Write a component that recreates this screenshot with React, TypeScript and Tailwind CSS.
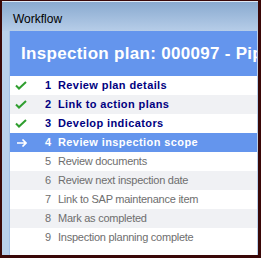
const steps = [
  { n: 1, label: 'Review plan details', state: 'done' },
  { n: 2, label: 'Link to action plans', state: 'done' },
  { n: 3, label: 'Develop indicators', state: 'done' },
  { n: 4, label: 'Review inspection scope', state: 'current' },
  { n: 5, label: 'Review documents', state: 'todo' },
  { n: 6, label: 'Review next inspection date', state: 'todo' },
  { n: 7, label: 'Link to SAP maintenance item', state: 'todo' },
  { n: 8, label: 'Mark as completed', state: 'todo' },
  { n: 9, label: 'Inspection planning complete', state: 'todo' },
]

function Check() {
  return (
    <svg width="12" height="9" viewBox="0 0 12 9">
      <path d="M1 4.5 L4 7.5 L11 1" fill="none" stroke="#2f9e2f" strokeWidth="2" />
    </svg>
  )
}

function Arrow() {
  return (
    <svg width="10" height="8" viewBox="0 0 10 8">
      <path d="M0 4 H9 M5.5 0.5 L9 4 L5.5 7.5" fill="none" stroke="#ffffff" strokeWidth="1.6" />
    </svg>
  )
}

export default function App() {
  return (
    <div className="w-[261px] h-[258px] bg-[#3a0808] pl-[2px] pt-[1px] pr-[3px] pb-[3px] font-['Liberation_Sans',Arial,sans-serif]">
      <div className="h-full flex flex-col bg-[#b9d0ea] border-t border-[#dfe9f5]">
        {/* title bar */}
        <div className="h-[29px] shrink-0 bg-gradient-to-b from-[#8aaad0] to-[#b6cde8] pl-[11px] pt-[10px] text-[12px] leading-[15px] text-black">
          Workflow
        </div>

        <div className="flex-1 ml-[7px] mr-px flex flex-col bg-white border-l border-[#a4c0e6] overflow-hidden">
          {/* header */}
          <div className="h-[45px] shrink-0 bg-[#6495ed] flex items-center pl-[12px] -ml-px whitespace-nowrap">
            <span className="text-[17px] font-bold text-white tracking-[0.3px]">
              Inspection plan: 000097 - Pip
            </span>
          </div>

          {/* steps */}
          <div className="flex flex-col">
            {steps.map((s, i) => {
              const current = s.state === 'current'
              const done = s.state === 'done'
              const bg = current ? 'bg-[#6495ed]' : i % 2 === 1 ? 'bg-[#f0f1f4]' : 'bg-white'
              const text = current
                ? 'text-white font-bold tracking-[0.4px]'
                : done
                  ? 'text-[#000080] font-bold tracking-[0.4px]'
                  : 'text-[#6e6e6e] tracking-[-0.25px]'
              return (
                <div key={s.n} className={`h-[19px] flex items-center text-[11px] leading-[19px] whitespace-nowrap ${bg} ${text}`}>
                  <div className="w-[30px] pl-[5px] flex items-center">
                    {done && <Check />}
                    {current && <span className="ml-[2px] flex"><Arrow /></span>}
                  </div>
                  <span className="w-[11px] text-right tracking-normal">{s.n}</span>
                  <span className="ml-[7px]">{s.label}</span>
                </div>
              )
            })}
          </div>
        </div>
      </div>
    </div>
  )
}
